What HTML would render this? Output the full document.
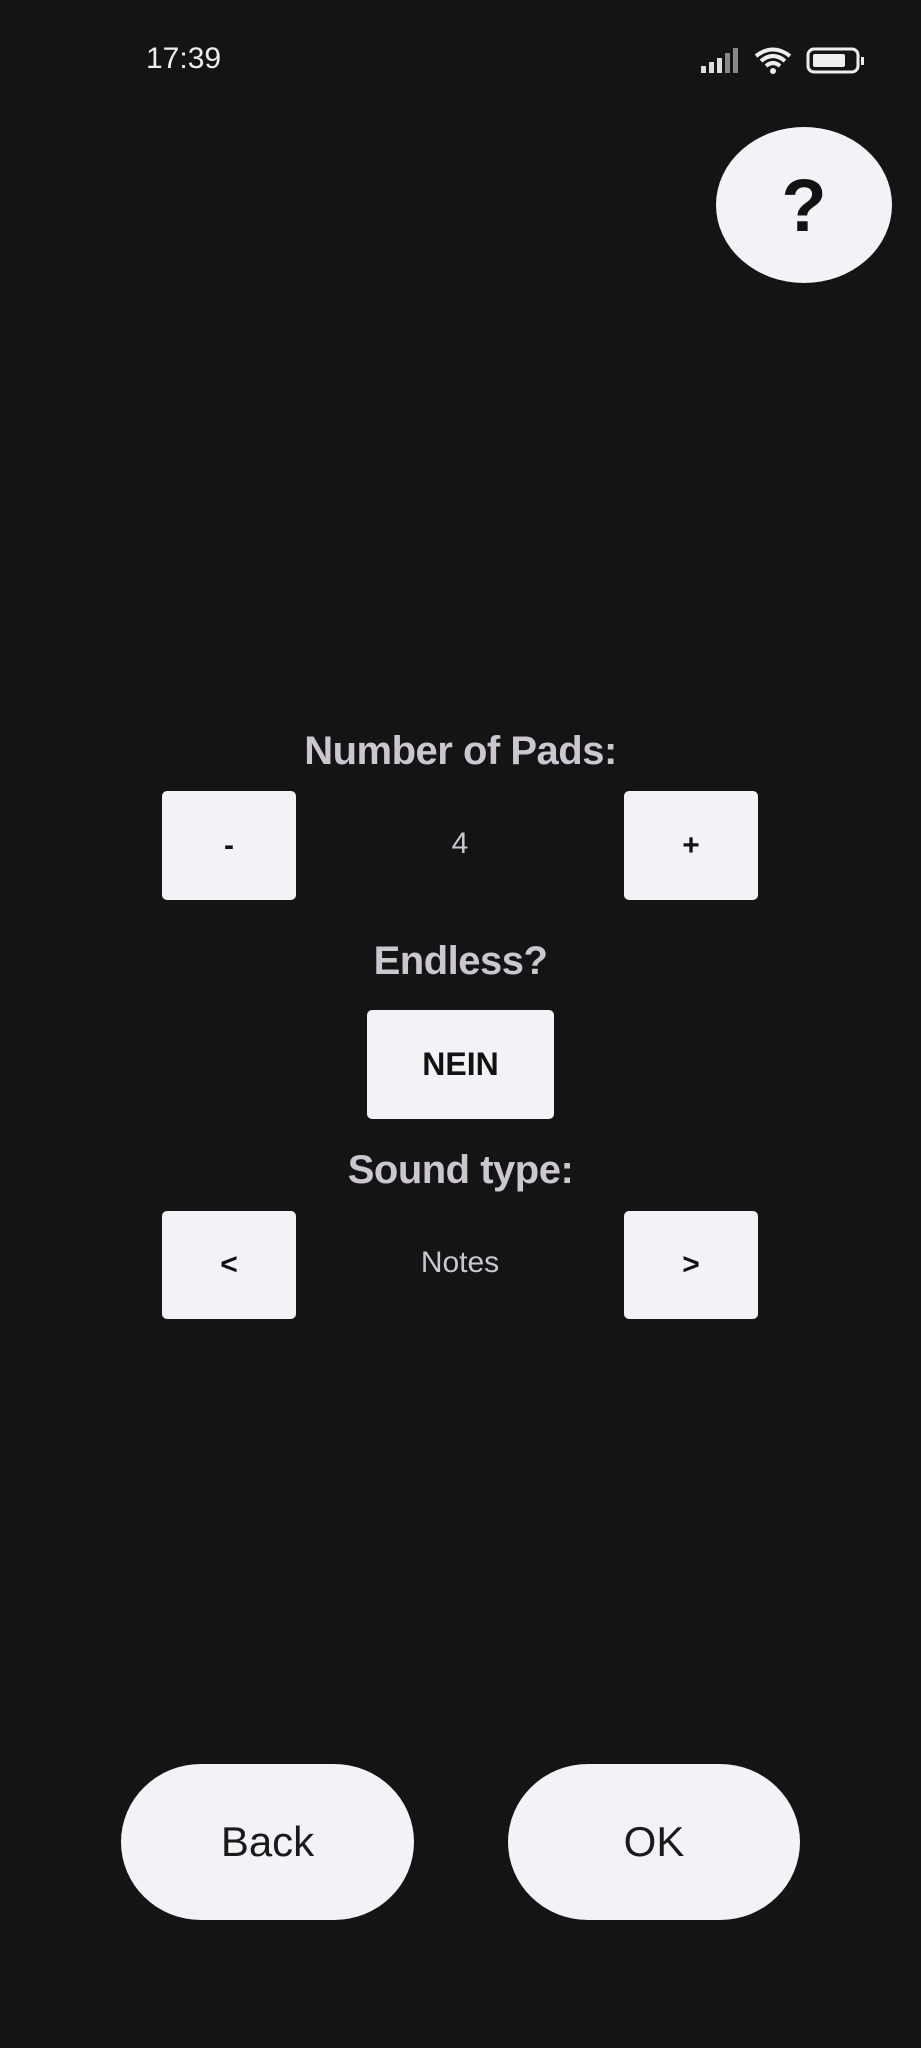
<!DOCTYPE html>
<html><head><meta charset="utf-8"><style>
html,body{margin:0;padding:0;background:#141414;}
body{width:921px;height:2048px;position:relative;overflow:hidden;font-family:"Liberation Sans",sans-serif;}
.a{position:absolute;}
.btn{position:absolute;background:#f5f2f7;border-radius:5px;display:flex;align-items:center;justify-content:center;color:#121212;font-weight:bold;}
.lbl{position:absolute;left:0;width:921px;text-align:center;color:#cbc6d0;font-weight:bold;font-size:40px;line-height:40px;letter-spacing:-0.5px;}
.val{position:absolute;width:200px;left:360px;text-align:center;color:#cbc6d0;font-size:30px;line-height:30px;}
.pill{position:absolute;background:#f5f2f7;border-radius:80px/78px;display:flex;align-items:center;justify-content:center;color:#1a1a1a;font-size:42px;}
</style></head><body>
<div class="a" style="left:146px;top:43px;color:#eee;font-size:30px;line-height:32px;">17:39</div>
<svg class="a" style="left:700px;top:46px" width="170" height="30" viewBox="0 0 170 30">
<rect x="1" y="20" width="5" height="7" fill="#ddd"/><rect x="9" y="16" width="5" height="11" fill="#ddd"/><rect x="17" y="12" width="5" height="15" fill="#ddd"/><rect x="25" y="7" width="5" height="20" fill="#888"/><rect x="33" y="2" width="5" height="25" fill="#888"/>
<path d="M56 10 Q73 -3 90 10" stroke="#eee" stroke-width="4" fill="none"/><path d="M61 15 Q73 5 85 15" stroke="#eee" stroke-width="4" fill="none"/><path d="M66 20 Q73 14 80 20" stroke="#eee" stroke-width="4" fill="none"/><circle cx="73" cy="25" r="3" fill="#eee"/>
<rect x="108" y="3" width="50" height="23" rx="6" fill="none" stroke="#eee" stroke-width="3"/><rect x="113" y="8" width="32" height="13" rx="2" fill="#eee"/><rect x="161" y="11" width="3" height="8" fill="#eee"/>
</svg>
<div class="pill" style="left:716px;top:127px;width:176px;height:156px;border-radius:50%;font-size:74px;font-weight:bold;color:#121212;">?</div>
<div class="lbl" style="top:731px;">Number of Pads:</div>
<div class="btn" style="left:162px;top:791px;width:134px;height:109px;font-size:30px;">-</div>
<div class="val" style="top:829px;">4</div>
<div class="btn" style="left:624px;top:791px;width:134px;height:109px;font-size:30px;">+</div>
<div class="lbl" style="top:941px;">Endless?</div>
<div class="btn" style="left:367px;top:1010px;width:187px;height:109px;font-size:32px;">NEIN</div>
<div class="lbl" style="top:1150px;">Sound type:</div>
<div class="btn" style="left:162px;top:1211px;width:134px;height:108px;font-size:30px;">&lt;</div>
<div class="val" style="top:1248px;">Notes</div>
<div class="btn" style="left:624px;top:1211px;width:134px;height:108px;font-size:30px;">&gt;</div>
<div class="pill" style="left:121px;top:1764px;width:293px;height:156px;">Back</div>
<div class="pill" style="left:508px;top:1764px;width:292px;height:156px;">OK</div>
</body></html>
